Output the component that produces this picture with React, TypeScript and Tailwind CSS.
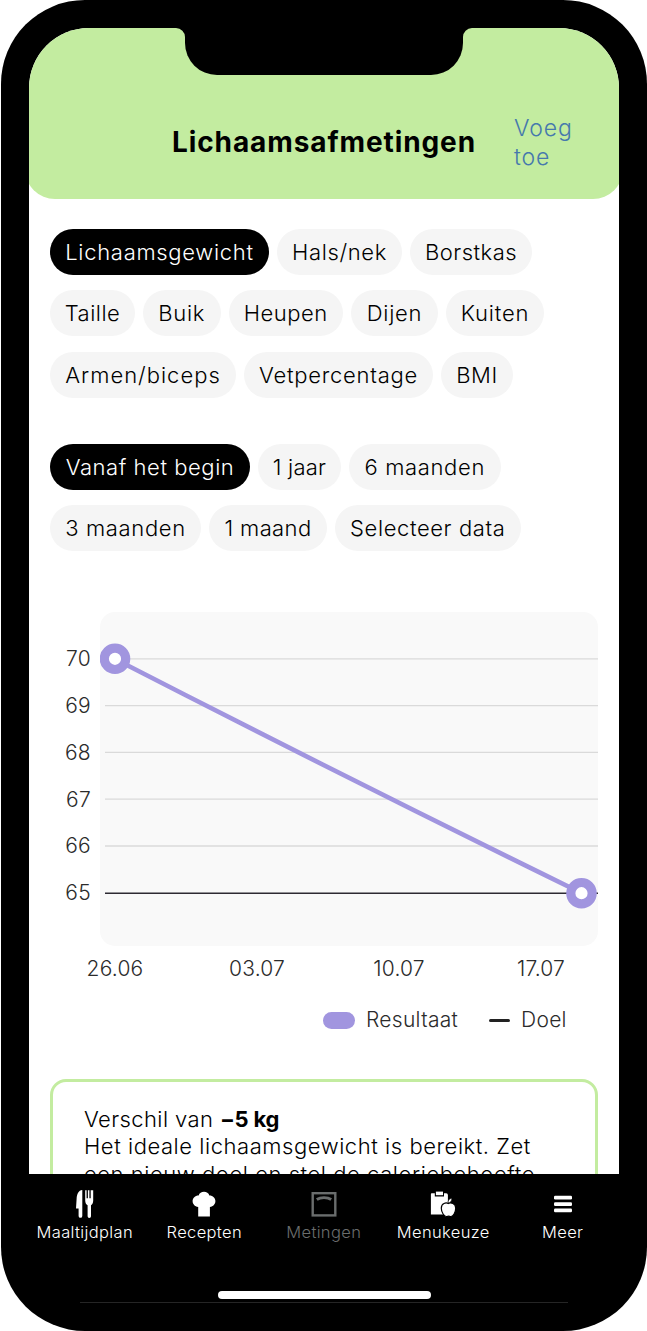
import React from 'react';
import clsx from 'clsx';

interface ChipItem {
  label: string;
  className: string;
}

const measurements: ChipItem[][] = [
  [
    { label: 'Lichaamsgewicht', className: 'w-[219px] tracking-[0.7px]' },
    { label: 'Hals/nek', className: 'w-[125px] tracking-[0.65px]' },
    { label: 'Borstkas', className: 'w-[122px] tracking-[0.5px]' },
  ],
  [
    { label: 'Taille', className: 'w-[85px] tracking-[0.5px]' },
    { label: 'Buik', className: 'w-[77.5px] tracking-[0.7px]' },
    { label: 'Heupen', className: 'w-[114.5px] tracking-[0.5px]' },
    { label: 'Dijen', className: 'w-[87px] tracking-[0.7px]' },
    { label: 'Kuiten', className: 'w-[98px] tracking-[0.8px]' },
  ],
  [
    { label: 'Armen/biceps', className: 'w-[186px] tracking-[1px]' },
    { label: 'Vetpercentage', className: 'w-[189px] tracking-[0.75px]' },
    { label: 'BMI', className: 'w-[72px] tracking-[0.5px]' },
  ],
];

const periods: ChipItem[][] = [
  [
    { label: 'Vanaf het begin', className: 'w-[200px] tracking-[0.55px]' },
    { label: '1 jaar', className: 'w-[83px] tracking-[0.2px]' },
    { label: '6 maanden', className: 'w-[151.5px] tracking-[0.65px]' },
  ],
  [
    { label: '3 maanden', className: 'w-[151px] tracking-[0.65px]' },
    { label: '1 maand', className: 'w-[118px] tracking-[0.4px]' },
    { label: 'Selecteer data', className: 'w-[185.5px] tracking-[0.6px]' },
  ],
];

const ChipRows = ({ rows }: { rows: ChipItem[][] }) => (
  <div className="flex flex-col gap-[15.4px]">
    {rows.map((row, rowIndex) => (
      <div key={rowIndex} className="flex gap-2">
        {row.map((chip, index) => (
          <button
            key={chip.label}
            className={clsx(
              'h-[46px] rounded-full text-[22px] leading-[46px] text-center whitespace-nowrap',
              rowIndex === 0 && index === 0 ? 'bg-black text-white' : 'bg-[#f5f5f5] text-black',
              chip.className
            )}
          >
            {chip.label}
          </button>
        ))}
      </div>
    ))}
  </div>
);

const values = [70, 69, 68, 67, 66, 65];

const Chart = () => (
  <div className="mt-[61.2px]">
    <div className="flex">
      <div className="w-[41px] mr-[9px] pt-[24px] flex flex-col text-right text-[21px] tracking-[0.3px] text-[#2b2b2b]">
        {values.map((value) => (
          <span key={value} className="h-[46.8px] leading-[46.8px]">{value}</span>
        ))}
      </div>
      <svg className="w-[498px] h-[334px] rounded-[15px] bg-[#f9f9f9]" viewBox="0 0 498 334" fill="none">
        {values.slice(0, 5).map((value, index) => (
          <path key={value} d={`M5 ${46.8 + index * 46.8}H498`} stroke="#dadada" strokeWidth="1.3" />
        ))}
        <path d="M5 281.2H498" stroke="#2d2a32" strokeWidth="1.6" />
        <path d="M15 47C160 121.5 320 202 481.5 281" stroke="#a195df" strokeWidth="4.6" />
        <circle cx="15" cy="46.8" r="10.7" fill="#fff" stroke="#a195df" strokeWidth="9.2" />
        <circle cx="481.5" cy="281.2" r="10.7" fill="#fff" stroke="#a195df" strokeWidth="9.2" />
      </svg>
    </div>
    <div className="flex ml-[-6px] mt-[9px] text-[21px] leading-[28px] tracking-[0.2px] text-center text-[#2b2b2b]">
      <span className="w-[142px] shrink-0">26.06</span>
      <span className="w-[142px] shrink-0">03.07</span>
      <span className="w-[142px] shrink-0">10.07</span>
      <span className="w-[142px] shrink-0">17.07</span>
    </div>
    <div className="flex items-center mt-[23px] ml-[273px] h-[28px] text-[21px] tracking-[0.3px] text-[#2b2b2b]">
      <span className="w-8 h-[17px] rounded-full bg-[#a195df] mr-[11px]" />
      <span className="w-[123px]">Resultaat</span>
      <span className="w-[21px] h-[3px] rounded-full bg-[#222] mr-[11px]" />
      <span>Doel</span>
    </div>
  </div>
);

const CutleryIcon = () => (
  <svg width="18" height="28" viewBox="0 0 18 28" fill="currentColor">
    <path d="M6.3 0C2.5.5.9 3.7.6 9L0 18.5h2.6V26a1.8 1.8 0 0 0 3.7 0V0Z" />
    <path d="M9.2.2h1.4v8h1.3v-8h1.5v8h1.3v-8h2.5v10.2c0 2.3-.9 4-2.2 4.8v11a1.7 1.7 0 0 1-3.4 0V15.2c-1.5-.8-2.4-2.5-2.4-4.8Z" />
  </svg>
);

const ChefHatIcon = () => (
  <svg width="24" height="28" viewBox="0 0 24 28" fill="currentColor">
    <path d="M6.2 26.4V17C2.8 16.6.6 14.2.6 11.1c0-3.3 2.7-5.8 6-5.7C7.4 3.1 9.5 1.8 12 1.8s4.6 1.3 5.4 3.6c3.3-.1 6 2.4 6 5.7 0 3.1-2.1 5.5-5.5 5.9v9.4Z" />
  </svg>
);

const ScaleIcon = () => (
  <svg width="26" height="28" viewBox="0 0 26 28" fill="none" stroke="currentColor">
    <rect x="1.7" y="3.2" width="22.6" height="22.2" strokeWidth="2.4" />
    <path d="M5.8 9.5C9.5 6.9 16.5 6.9 20.2 9.5" strokeWidth="2.8" />
  </svg>
);

const MenuChoiceIcon = () => (
  <svg width="26" height="28" viewBox="0 0 26 28" fill="currentColor">
    <path d="M1.5 3.3H4.8v3.2h9.2V3.3h2.2a1.7 1.7 0 0 1 1.7 1.7v19.6H.9V5c0-1 .1-1.7.6-1.7Z" />
    <path d="M5.9 1.6h7.1v3.6H5.9Z" />
    <path
      d="M18.2 13.5c-2-1.1-6.9-.5-6.9 4.7 0 4.2 3 8.4 5.3 8.4.8 0 1.2-.4 2-.4s1.3.4 2.1.4c2.4 0 5-4.2 5-8.3 0-5-4.9-6-7.5-4.8Z"
      stroke="#000"
      strokeWidth="1.2"
    />
    <path d="M18.1 13c-.3-2.7 1-4.3 3.7-4.8.2 2.6-1.1 4.3-3.7 4.8Z" stroke="#000" strokeWidth=".6" />
  </svg>
);

const MoreIcon = () => (
  <svg width="18" height="28" viewBox="0 0 18 28" fill="currentColor">
    <rect y="5.8" width="18" height="3.7" rx="1.2" />
    <rect y="12.2" width="18" height="3.7" rx="1.2" />
    <rect y="18.6" width="18" height="3.7" rx="1.2" />
  </svg>
);

const tabs = [
  { label: 'Maaltijdplan', icon: CutleryIcon },
  { label: 'Recepten', icon: ChefHatIcon },
  { label: 'Metingen', icon: ScaleIcon, muted: true },
  { label: 'Menukeuze', icon: MenuChoiceIcon },
  { label: 'Meer', icon: MoreIcon },
];

export default function App() {
  return (
    <div className="w-[647px] h-[1331px] bg-white pl-px font-['Inter',sans-serif] font-light">
      <div className="relative w-[646px] h-[1331px] rounded-[84px] bg-black overflow-hidden pt-7">
        {/* Screen */}
        <div className="mx-7 w-[590px] h-[1146px] rounded-t-[60px] bg-white overflow-hidden">
          <header className="flex -mx-1 h-[170.5px] rounded-b-[30px] bg-[#c3eca0]">
            <h1 className="w-[485px] pl-[147px] pt-[95px] text-[28px] leading-[38px] font-bold tracking-[0.9px] whitespace-nowrap">
              Lichaamsafmetingen
            </h1>
            <button className="w-[70px] ml-[4px] pt-[86px] self-start text-left text-[23px] leading-[29px] tracking-[0.9px] text-[#4679ad]">
              Voeg toe
            </button>
          </header>

          <main className="px-[21px] pt-[30.5px]">
            <ChipRows rows={measurements} />
            <div className="mt-[45.8px]">
              <ChipRows rows={periods} />
            </div>
            <Chart />
            <section className="mt-[45px] w-[548px] h-[160px] rounded-[16px] border-3 border-[#c3eca0] pl-[31px] pt-[23.5px] text-[22px] leading-[27.6px] tracking-[0.55px] whitespace-nowrap">
              <p className="tracking-[0.4px]">
                Verschil van <strong className="font-bold tracking-[-0.2px]">−5 kg</strong>
              </p>
              <p>Het ideale lichaamsgewicht is bereikt. Zet</p>
              <p>een nieuw doel en stel de caloriebehoefte</p>
            </section>
          </main>
        </div>

        {/* Notch */}
        <div className="absolute top-0 left-[184px] w-[278px] h-[75px] rounded-b-[32px] bg-black" />
        <svg className="absolute top-[28px] left-[175px]" width="9" height="9" viewBox="0 0 9 9">
          <path d="M0 0H9V9A9 9 0 0 0 0 0Z" />
        </svg>
        <svg className="absolute top-[28px] left-[462px]" width="9" height="9" viewBox="0 0 9 9">
          <path d="M9 0H0V9A9 9 0 0 1 9 0Z" />
        </svg>

        {/* Tab bar */}
        <nav className="flex ml-6 mr-6 pt-4 text-white">
          {tabs.map(({ label, icon: Icon, muted }) => (
            <a key={label} className={clsx('w-[119.5px] flex flex-col items-center', muted && 'text-[#6a6d6d]')}>
              <Icon />
              <span className="mt-[4px] text-[16.5px] leading-[20px] tracking-[0.35px]">{label}</span>
            </a>
          ))}
        </nav>
        <div className="mx-auto mt-[49px] w-[213px] h-2 rounded-full bg-white" />
        <div className="mx-auto mt-[3px] w-[488px] h-px bg-[#252525]" />
      </div>
    </div>
  );
}
